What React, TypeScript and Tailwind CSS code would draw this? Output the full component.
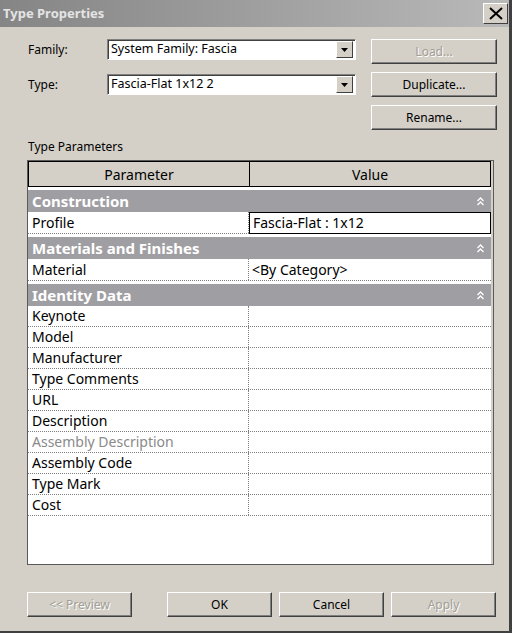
const font = { fontFamily: '"Noto Sans", "DejaVu Sans", sans-serif' };

function WinButton({ label, disabled, className }: { label: string; disabled?: boolean; className: string }) {
    return (
        <div
            className={`h-[25px] flex items-center justify-center bg-[#d4d0c8] border border-t-white border-l-white border-r-[#404040] border-b-[#404040] shadow-[inset_-1px_-1px_0_#808080] text-[12px] ${
                disabled ? 'text-[#a19e96] [text-shadow:1px_1px_0_#fff]' : 'text-black'
            } ${className}`}
        >
            {label}
        </div>
    );
}

function Combo({ value }: { value: string }) {
    return (
        <div className="w-[249px] h-[21px] flex items-center bg-white border border-t-[#808080] border-l-[#808080] border-r-white border-b-white shadow-[inset_1px_1px_0_#404040] pl-[3px] pr-[2px]">
            <span className="flex-1 text-[12.5px] text-black leading-none">{value}</span>
            <div className="w-[17px] h-[17px] flex items-center justify-center bg-[#d4d0c8] border border-t-white border-l-white border-r-[#404040] border-b-[#404040]">
                <svg width="7" height="4" viewBox="0 0 7 4">
                    <path d="M0 0h7L3.5 4z" fill="#000" />
                </svg>
            </div>
        </div>
    );
}

function Chevrons() {
    return (
        <svg width="7" height="9" viewBox="0 0 7 9" className="mr-[7px]">
            <path d="M0.5 4L3.5 1L6.5 4" fill="none" stroke="#fff" strokeWidth="1.3" />
            <path d="M0.5 8L3.5 5L6.5 8" fill="none" stroke="#fff" strokeWidth="1.3" />
        </svg>
    );
}

function GroupRow({ title }: { title: string }) {
    return (
        <div className="mt-[3px] h-[22px] bg-[#9f9ea3] flex items-center justify-between pl-[4px]">
            <span className="text-[15px] font-bold text-white leading-none">{title}</span>
            <Chevrons />
        </div>
    );
}

function DataRow({ name, value, dim, selected, tall }: { name: string; value?: string; dim?: boolean; selected?: boolean; tall?: boolean }) {
    return (
        <div className={`${tall ? 'h-[22px]' : 'h-[21px]'} flex border-b border-dotted border-[#808080]`}>
            <div className={`w-[221px] flex items-center pl-[4px] border-r border-dotted border-[#808080] text-[14px] leading-none ${dim ? 'text-[#8a8a8a]' : 'text-black'}`}>
                {name}
            </div>
            <div className={`flex-1 flex items-center pl-[3px] text-[14px] text-black leading-none ${selected ? 'border border-black -mb-px' : ''}`}>
                {value}
            </div>
        </div>
    );
}

const identity = [
    'Keynote',
    'Model',
    'Manufacturer',
    'Type Comments',
    'URL',
    'Description',
    'Assembly Description',
    'Assembly Code',
    'Type Mark',
    'Cost',
];

export default function App() {
    return (
        <div style={font} className="w-[512px] h-[633px] bg-[#d4d0c8] flex flex-col border-r-[3px] border-b-[2px] border-r-[#404040] border-b-[#404040] overflow-hidden">
            {/* Title bar */}
            <div className="h-[27px] shrink-0 flex items-center justify-between pl-[3px] pr-[1px] bg-gradient-to-r from-[#858585] to-[#b9b9b9]">
                <span className="text-[13px] font-bold text-[#e4e4e4] leading-none">Type Properties</span>
                <div className="w-[25px] h-[21px] flex items-center justify-center bg-[#d4d0c8] border border-t-white border-l-white border-r-[#404040] border-b-[#404040]">
                    <svg width="14" height="13" viewBox="0 0 14 13">
                        <path d="M1 1L13 12M13 1L1 12" stroke="#000" strokeWidth="2" />
                    </svg>
                </div>
            </div>

            {/* Family / Type */}
            <div className="flex pt-[12px]">
                <div className="flex flex-col gap-[14px] pl-[28px]">
                    <div className="flex items-center">
                        <span className="w-[79px] text-[12px] text-black">Family:</span>
                        <Combo value="System Family: Fascia" />
                    </div>
                    <div className="flex items-center">
                        <span className="w-[79px] text-[12px] text-black">Type:</span>
                        <Combo value="Fascia-Flat 1x12 2" />
                    </div>
                </div>
                <div className="flex flex-col gap-[8px] ml-[15px]">
                    <WinButton label="Load..." disabled className="w-[126px]" />
                    <WinButton label="Duplicate..." className="w-[126px]" />
                    <WinButton label="Rename..." className="w-[126px]" />
                </div>
            </div>

            <div className="pl-[28px] mt-[8px] h-[22px] text-[12px] text-black">Type Parameters</div>

            {/* Table */}
            <div className="ml-[27px] w-[467px] h-[405px] flex border border-[#5a5a5a]">
                <div className="w-[463px] bg-white flex flex-col">
                    <div className="h-[26px] flex bg-[#d4d0c8]">
                        <div className="w-[222px] flex items-center justify-center border border-black text-[14px] text-black">Parameter</div>
                        <div className="flex-1 flex items-center justify-center border border-l-0 border-black text-[14px] text-black">Value</div>
                    </div>
                    <GroupRow title="Construction" />
                    <DataRow name="Profile" value="Fascia-Flat : 1x12" selected tall />
                    <GroupRow title="Materials and Finishes" />
                    <DataRow name="Material" value="<By Category>" tall />
                    <GroupRow title="Identity Data" />
                    {identity.map((n) => (
                        <DataRow key={n} name={n} dim={n === 'Assembly Description'} />
                    ))}
                </div>
                <div className="flex-1 bg-[#d4d0c8]" />
            </div>

            {/* Bottom buttons */}
            <div className="flex pl-[27px] mt-[27px]">
                <WinButton label="<< Preview" disabled className="w-[105px]" />
                <WinButton label="OK" className="w-[105px] ml-[35px]" />
                <WinButton label="Cancel" className="w-[105px] ml-[7px]" />
                <WinButton label="Apply" disabled className="w-[105px] ml-[7px]" />
            </div>
        </div>
    );
}
